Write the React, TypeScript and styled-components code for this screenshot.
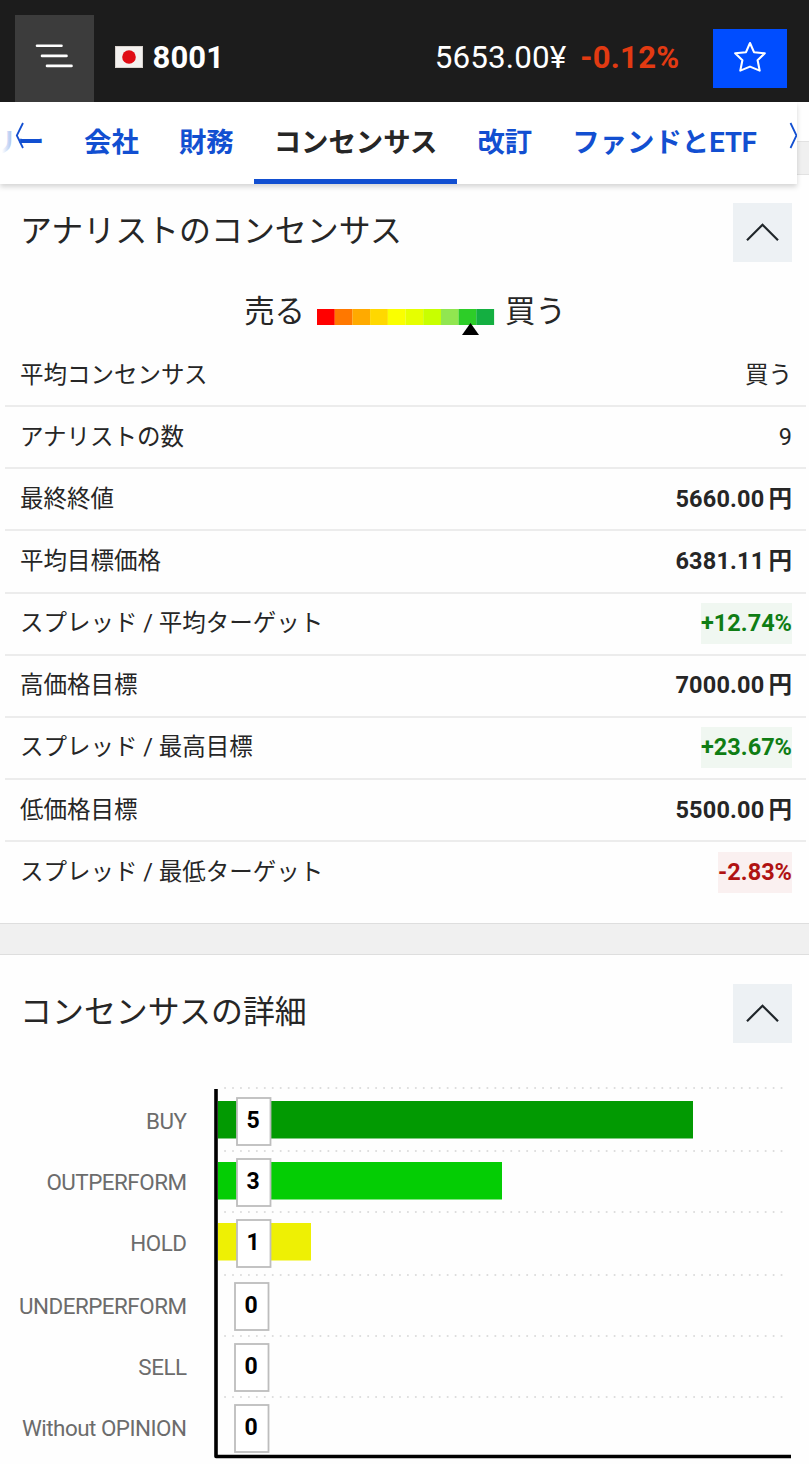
import React from "react";
import styled, { createGlobalStyle } from "styled-components";

const GlobalStyle = createGlobalStyle`
  * { box-sizing: border-box; }
  body {
    margin: 0;
    background: #fefefe;
    color: #262626;
    font-family: Roboto, "Noto Sans CJK JP", sans-serif;
  }
  button { font: inherit; border: 0; padding: 0; cursor: pointer; }
`;

const Page = styled.div`
  width: 809px;
  height: 1464px;
  overflow: hidden;
  background: #fefefe;
`;

const TopBar = styled.header`
  display: flex;
  align-items: flex-start;
  height: 102px;
  padding: 15px 22px 0 15px;
  background: #1c1c1c;
  color: #fff;
`;

const MenuButton = styled.button`
  width: 79px;
  height: 87px;
  background: #3c3c3c;
  svg { display: block; }
`;

const Ticker = styled.div`
  display: flex;
  align-items: center;
  gap: 9.5px;
  height: 84px;
  margin-left: 21px;
  font-size: 31px;
  font-weight: 700;
  letter-spacing: 0.1px;
`;

const Quote = styled.div`
  display: flex;
  align-items: center;
  height: 84px;
  margin-left: auto;
  font-size: 31.4px;
`;

const Price = styled.span`
  letter-spacing: 0.1px;
`;

const Change = styled.span`
  margin-left: 14px;
  color: #e23a12;
  font-size: 31px;
  font-weight: 700;
  letter-spacing: 0.3px;
`;

const StarButton = styled.button`
  display: flex;
  align-items: flex-start;
  justify-content: center;
  width: 74px;
  height: 59px;
  margin: 14px 0 0 33.5px;
  padding-top: 11px;
  background: #004dff;
`;

const TabStrip = styled.div`
  display: flex;
  height: 82px;
`;

const Tabs = styled.nav`
  position: relative;
  z-index: 1;
  display: flex;
  flex: none;
  justify-content: flex-start;
  width: 797px;
  background: #fff;
  box-shadow: 0 3px 5px rgba(0, 0, 0, 0.16);
`;

const TabsInner = styled.div`
  display: flex;
  width: 797px;
  overflow: hidden;
`;

const Tab = styled.a<{ $active?: boolean; $cut?: boolean }>`
  flex: none;
  height: 82px;
  padding: 0 20px;
  margin-left: ${(p) => (p.$cut ? "-85.5px" : "0")};
  border-bottom: 5px solid ${(p) => (p.$active ? "#124fd1" : "transparent")};
  color: ${(p) => (p.$active ? "#262626" : "#124fd1")};
  font-size: 27.4px;
  font-weight: 700;
  line-height: 83px;
  white-space: nowrap;
`;

const EdgeArrow = styled.div<{ $side: "left" | "right" }>`
  position: absolute;
  top: 0;
  ${(p) => p.$side}: 0;
  width: 21px;
  height: 82px;
  background: ${(p) =>
    p.$side === "left"
      ? "linear-gradient(to right, #fff 10%, rgba(255,255,255,0.4) 90%, rgba(255,255,255,0))"
      : "transparent"};
  svg { display: block; }
`;

const Gutter = styled.div`
  flex: 1;
  height: 70px;
  padding-top: 39px;
  background: #fefefe;
  &::before {
    content: "";
    display: block;
    height: 32px;
    background: #f0f0f0;
    border-top: 1px solid #e2e2e2;
    border-bottom: 1px solid #e2e2e2;
  }
`;

const Section = styled.section<{ $top: number }>`
  padding-top: ${(p) => p.$top}px;
`;

const SectionHead = styled.div`
  display: flex;
  justify-content: space-between;
  height: 59px;
  padding: 0 17px 0 20px;
`;

const Title = styled.h2`
  margin: 0;
  font-size: 31.95px;
  font-weight: 400;
  line-height: 57px;
`;

const Collapse = styled.button`
  width: 59px;
  height: 59px;
  background: #edf1f4;
  svg { display: block; }
`;

const Gauge = styled.div`
  display: flex;
  justify-content: center;
  height: 83px;
  padding: 21px 0 0 1px;
  font-size: 30.4px;
  line-height: 58px;
  svg { display: block; margin: 26px 10.5px 0 11.5px; }
`;

const Rows = styled.div`
  padding: 0 3px 19px 5px;
`;

const Row = styled.div`
  display: flex;
  align-items: center;
  justify-content: space-between;
  height: 62.15px;
  padding: 0 14px 0 15px;
  border-bottom: 2px solid #ececec;
  font-size: 23.5px;
  &:last-child { border-bottom-color: transparent; }
`;

const Label = styled.span`
  height: 41px;
  line-height: 41px;
  white-space: pre;
`;

const Value = styled.span<{ $kind: "plain" | "price" | "up" | "down" }>`
  height: 41px;
  line-height: 41px;
  font-weight: ${(p) => (p.$kind === "plain" ? 400 : 700)};
  letter-spacing: ${(p) => (p.$kind === "price" ? "0.2px" : "0")};
  color: ${(p) => (p.$kind === "up" ? "#0f7d14" : p.$kind === "down" ? "#b01212" : "inherit")};
  background: ${(p) => (p.$kind === "up" ? "#f0f7f1" : p.$kind === "down" ? "#faf0f0" : "transparent")};
`;

const Unit = styled.span`
  margin-left: 4px;
  letter-spacing: 0;
`;

const Divider = styled.div`
  height: 32px;
  background: #f0f0f0;
  border-top: 1px solid #dedede;
  border-bottom: 1px solid #dedede;
`;

const Chart = styled.svg`
  display: block;
  margin-top: 37px;
`;

type Kind = "plain" | "price" | "up" | "down";
const rows: [string, string, Kind][] = [
  ["平均コンセンサス", "買う", "plain"],
  ["アナリストの数", "9", "plain"],
  ["最終終値", "5660.00", "price"],
  ["平均目標価格", "6381.11", "price"],
  ["スプレッド / 平均ターゲット", "+12.74%", "up"],
  ["高価格目標", "7000.00", "price"],
  ["スプレッド / 最高目標", "+23.67%", "up"],
  ["低価格目標", "5500.00", "price"],
  ["スプレッド / 最低ターゲット", "-2.83%", "down"],
];

const gaugeColors = ["#ff0000", "#ff7800", "#ffaa00", "#ffd800", "#faff00", "#e6ff00", "#c8ff00", "#91e650", "#2dcd28", "#14af41"];

const ratings = [
  { name: "BUY", count: 5, color: "#029a02", y: 41, width: 475 },
  { name: "OUTPERFORM", count: 3, color: "#04cd04", y: 102, width: 284 },
  { name: "HOLD", count: 1, color: "#eef004", y: 163, width: 93 },
  { name: "UNDERPERFORM", count: 0, color: "", y: 226, width: 0 },
  { name: "SELL", count: 0, color: "", y: 287, width: 0 },
  { name: "Without OPINION", count: 0, color: "", y: 348, width: 0 },
];

const gridLines = [8, 71, 132, 195, 256, 317];

const Chevron = () => (
  <Collapse aria-label="collapse">
    <svg width="59" height="59" viewBox="0 0 59 59" fill="none" stroke="#20262a" strokeWidth="2.2">
      <path d="M14 37.2 29.5 21.7 45 37.2" />
    </svg>
  </Collapse>
);

export default function App() {
  return (
    <Page>
      <GlobalStyle />
      <TopBar>
        <MenuButton aria-label="menu">
          <svg width="79" height="87" stroke="#fff" strokeWidth="2.6" strokeLinecap="round">
            <path d="M22 30.7H46.5M27 40.9H51.5M32 50.9H56.5" />
          </svg>
        </MenuButton>
        <Ticker>
          <svg width="28" height="22" viewBox="0 0 28 22">
            <rect width="28" height="22" fill="#f3f1ef" />
            <rect x=".5" y=".5" width="27" height="21" fill="none" stroke="#d8d2cd" />
            <circle cx="14" cy="11" r="6.8" fill="#e00c14" />
          </svg>
          8001
        </Ticker>
        <Quote>
          <Price>5653.00¥</Price>
          <Change>-0.12%</Change>
        </Quote>
        <StarButton aria-label="favorite">
          <svg width="34" height="34" viewBox="0 0 34 34" fill="none" stroke="#fff" strokeWidth="2.1" strokeLinejoin="round">
            <path d="M17 3 21 12.2 31.8 13.3 24.6 20.2 26.7 30.6 17 26.6 7.3 30.6 9.4 20.2 2.2 13.3 13 12.2Z" />
          </svg>
        </StarButton>
      </TopBar>

      <TabStrip>
        <Tabs>
          <TabsInner>
            <Tab $cut>サマリー</Tab>
            <Tab>会社</Tab>
            <Tab>財務</Tab>
            <Tab $active>コンセンサス</Tab>
            <Tab>改訂</Tab>
            <Tab>ファンドとETF</Tab>
          </TabsInner>
          <EdgeArrow $side="left">
            <svg width="26" height="82" fill="none" stroke="#124fd1" strokeWidth="1.8">
              <path d="M23 21 16.8 33.5 23 46" />
            </svg>
          </EdgeArrow>
          <EdgeArrow $side="right">
            <svg width="21" height="82" fill="none" stroke="#124fd1" strokeWidth="1.8">
              <path d="M14.5 21 20.5 33.5 14.5 46" />
            </svg>
          </EdgeArrow>
        </Tabs>
        <Gutter />
      </TabStrip>

      <Section $top={19}>
        <SectionHead>
          <Title>アナリストのコンセンサス</Title>
          <Chevron />
        </SectionHead>
        <Gauge>
          <span>売る</span>
          <svg width="178" height="28" viewBox="0 0 178 28">
            {gaugeColors.map((c, i) => (
              <rect key={c} x={i * 17.7} y="0" width="17.8" height="16" fill={c} />
            ))}
            <path d="M145 26 153.5 14 162 26Z" fill="#000" />
          </svg>
          <span>買う</span>
        </Gauge>
        <Rows>
          {rows.map(([label, value, kind]) => (
            <Row key={label}>
              <Label>{label}</Label>
              <Value $kind={kind}>
                {value}
                {kind === "price" && <Unit>円</Unit>}
              </Value>
            </Row>
          ))}
        </Rows>
      </Section>
      <Divider />
      <Section $top={29}>
        <SectionHead>
          <Title>コンセンサスの詳細</Title>
          <Chevron />
        </SectionHead>
        <Chart width="809" height="384" viewBox="0 0 809 384">
          {gridLines.map((y) => (
            <line key={y} x1="225" x2="788" y1={y} y2={y} stroke="#dcdcdc" strokeWidth="2" strokeLinecap="round" strokeDasharray="0.1 7.85" />
          ))}
          {ratings.map((r) => {
            const boxX = r.count ? 237 : 235;
            return (
              <g key={r.name}>
                {r.width > 0 && <rect x="218" y={r.y - 20} width={r.width} height="37.5" fill={r.color} />}
                <rect x={boxX} y={r.y - 23} width="33.5" height="47" fill="#fff" stroke="#bdbdbd" strokeWidth="1.8" />
                <text x={boxX + 16} y={r.y + 7} textAnchor="middle" fontSize="23" fontWeight="700" fill="#000">
                  {r.count}
                </text>
                <text x="186.5" y={r.y + 7.5} textAnchor="end" fontSize="22.4" letterSpacing="-0.5" fill="#6c6c6c">
                  {r.name}
                </text>
              </g>
            );
          })}
          <path d="M216 9V376.5H791" fill="none" stroke="#000" strokeWidth="3.6" strokeLinejoin="round" />
        </Chart>
      </Section>
    </Page>
  );
}
